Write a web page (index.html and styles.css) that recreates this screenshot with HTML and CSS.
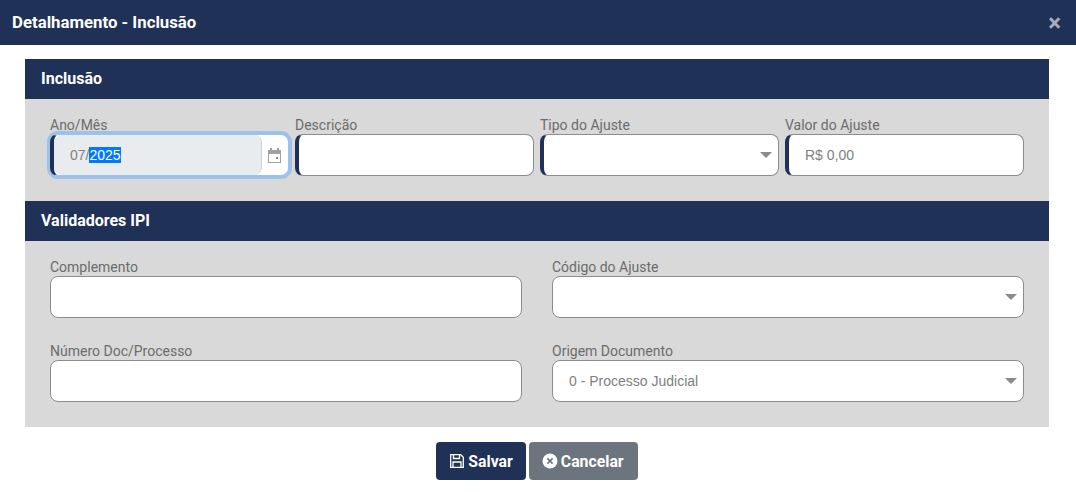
FILE: index.html
```html
<!DOCTYPE html>
<html lang="pt-BR">
<head>
  <meta charset="UTF-8" />
  <title>Detalhamento - Inclusão</title>
  <link rel="stylesheet" href="styles.css">
</head>
<body>
  <div class="modal-header">
    <h1>Detalhamento - Inclusão</h1>
    <span class="close">&times;</span>
  </div>

  <div class="content">
    <div class="section-title">Inclusão</div>
    <div class="section-body row-four">
      <div class="form-group">
        <label>Ano/Mês</label>
        <div class="input-box is-focused">
          <div class="date-value">07/<span class="selected">2025</span></div>
          <svg class="calendar" width="13" height="15" viewBox="0 0 13 15">
            <path fill="#a0a0a0" d="M0 2h2V0h2v2h5V0h2v2h2v13H0zM1 6v8h11V6z"/>
            <rect x="8" y="9" width="2" height="2" fill="#8a8a8a"/>
          </svg>
        </div>
      </div>
      <div class="form-group">
        <label>Descrição</label>
        <div class="input-box"></div>
      </div>
      <div class="form-group">
        <label>Tipo do Ajuste</label>
        <div class="input-box has-caret"></div>
      </div>
      <div class="form-group">
        <label>Valor do Ajuste</label>
        <div class="input-box"><span class="value">R$ 0,00</span></div>
      </div>
    </div>

    <div class="section-title">Validadores IPI</div>
    <div class="section-body row-two">
      <div class="form-group">
        <label>Complemento</label>
        <div class="input-box plain"></div>
      </div>
      <div class="form-group">
        <label>Código do Ajuste</label>
        <div class="input-box plain has-caret"></div>
      </div>
      <div class="form-group">
        <label>Número Doc/Processo</label>
        <div class="input-box plain"></div>
      </div>
      <div class="form-group">
        <label>Origem Documento</label>
        <div class="input-box plain has-caret"><span class="value">0 - Processo Judicial</span></div>
      </div>
    </div>
  </div>

  <div class="buttons">
    <button class="btn btn-save">
      <svg width="16" height="16" viewBox="0 0 16 16" fill="none" stroke="#fff" stroke-width="1.300">
        <path d="M1.700 1.700h10l2.600 2.600v10H1.700z"/>
        <path d="M4.500 1.700v3.800h6V1.700M4 14.300V9h8v5.300"/>
      </svg>
      Salvar
    </button>
    <button class="btn btn-cancel">
      <svg width="16" height="16" viewBox="0 0 16 16">
        <circle cx="8" cy="8" r="7.500" fill="#fff"/>
        <path d="M5.400 5.400l5.200 5.200M10.600 5.400l-5.200 5.200" stroke="#6c757d" stroke-width="1.600"/>
      </svg>
      Cancelar
    </button>
  </div>
</body>
</html>
```

FILE: styles.css
```css
body {
  font-family: Roboto, "Liberation Sans", sans-serif;
  background: #fff;
  margin: 0;
  padding: 0;
  color: #6c6c6c;
  font-size: 14px;
}

.modal-header {
  display: flex;
  justify-content: space-between;
  align-items: center;
  height: 45px;
  padding: 0 15px 0 12px;
  background: #1f3156;
  color: #fff;
}

.modal-header h1 {
  margin: 0;
  font-size: 16.800px;
  font-weight: 700;
  position: relative;
  top: -1px;
}

.close {
  font-size: 24px;
  font-weight: 700;
  color: #a5adbb;
  line-height: 1;
  padding-top: 1px;
}

.content {
  margin: 14px 27px 0 25px;
}

.section-title {
  height: 40px;
  line-height: 40px;
  padding-left: 16px;
  background: #1f3156;
  color: #fff;
  font-size: 16px;
  font-weight: 700;
}

.section-body {
  display: grid;
  background: #d9d9d9;
}

.row-four {
  grid-template-columns: repeat(4, 239px);
  column-gap: 6px;
  height: 102px;
  padding: 17px 25px 0;
  box-sizing: border-box;
}

.row-two {
  grid-template-columns: 472px 472px;
  column-gap: 30px;
  row-gap: 24px;
  height: 186px;
  padding: 17px 25px 0;
  box-sizing: border-box;
  align-content: start;
}

.form-group label {
  display: block;
  height: 18px;
  line-height: 18px;
}

.input-box {
  position: relative;
  display: flex;
  align-items: center;
  height: 42px;
  box-sizing: border-box;
  background: #fff;
  border: 1px solid #8c8c8c;
  border-left: 4px solid #1f3156;
  border-radius: 8px;
}

.input-box.plain {
  border-left: 1px solid #8c8c8c;
}

.input-box .value {
  padding-left: 16px;
  color: #808080;
  font-family: "Liberation Sans", sans-serif;
}

.input-box.has-caret::after {
  content: "";
  position: absolute;
  right: 6px;
  top: 17px;
  border-left: 6px solid transparent;
  border-right: 6px solid transparent;
  border-top: 6px solid #8a8a8a;
}

.input-box.is-focused {
  border-color: #9cc2ec;
  border-left-color: #1f3156;
  box-shadow: 0 0 0 3px #9cc2ec;
}

.date-value {
  flex: 1;
  align-self: stretch;
  display: flex;
  align-items: center;
  padding-left: 16px;
  background: #e9ecef;
  border-radius: 8px;
  border-right: 1px solid #d0d0d0;
  color: #808080;
  font-family: "Liberation Sans", sans-serif;
}

.selected {
  background: #0078ff;
  color: #fff;
}

.calendar {
  margin: 0 7px 0 6px;
}

.buttons {
  display: flex;
  justify-content: center;
  gap: 3px;
  margin-top: 15px;
  padding-right: 2px;
}

.btn {
  display: flex;
  align-items: center;
  gap: 3px;
  height: 38px;
  padding: 0 13px;
  border: none;
  border-radius: 4px;
  color: #fff;
  font-family: inherit;
  font-size: 15.800px;
  font-weight: 700;
}

.btn-save {
  background: #1f3156;
}

.btn-cancel {
  background: #6c757d;
  padding-right: 14px;
}
```
